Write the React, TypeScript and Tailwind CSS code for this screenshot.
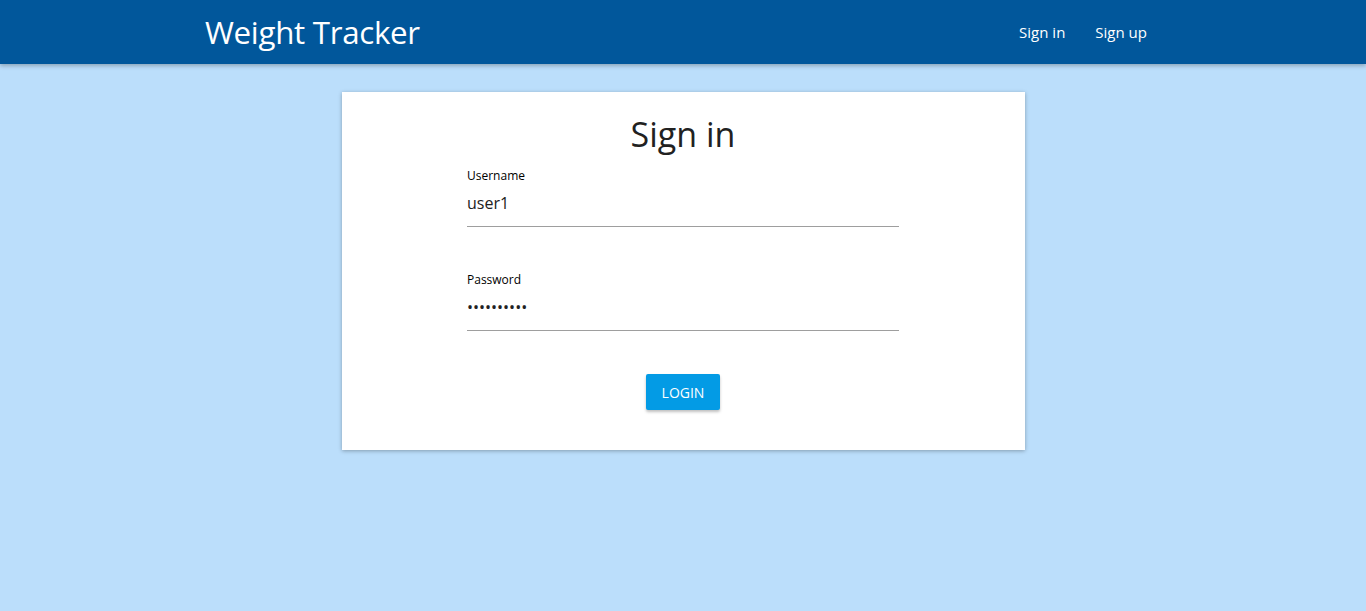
import React from 'react'

const App = () => {
  return (
    <div className="min-h-screen bg-[#bbdefb] text-[#212121] font-['Open_Sans',sans-serif]">
      <header className="h-16 bg-[#01579b] shadow-[0_2px_4px_rgba(0,0,0,0.25)]">
        <div className="mx-auto flex h-full w-[960px] items-center justify-between">
          <a href="#" className="pl-[2px] text-[31.3px] tracking-[-0.3px] text-white">Weight Tracker</a>
          <nav className="flex gap-[30px] pr-[16px] text-[15px] text-white">
            <a href="#">Sign in</a>
            <a href="#">Sign up</a>
          </nav>
        </div>
      </header>

      <main className="flex justify-center pt-7">
        <div className="w-1/2 bg-white pb-[40px] pt-[14px] shadow-[0_1px_4px_rgba(0,0,0,0.3)]">
          <h1 className="text-center text-[34px] leading-[56px]">Sign in</h1>
          <form className="mx-auto mt-[6px] w-[432px]">
            <label className="block text-[12px] leading-4 text-black">Username</label>
            <input
              defaultValue="user1"
              className="block h-[43px] w-full border-b border-[#9e9e9e] bg-transparent pb-[4px] pt-0 text-[16px] outline-none"
            />
            <label className="mt-[45px] block text-[12px] leading-4 text-black">Password</label>
            <input
              type="password"
              defaultValue="password12"
              className="block h-[43px] w-full border-b border-[#9e9e9e] bg-transparent pb-[4px] pt-0 text-[16px] outline-none"
            />
            <div className="mt-[43px] flex justify-center">
              <button
                type="button"
                className="h-9 rounded-[2px] bg-[#039be5] px-4 text-[14px] uppercase text-white shadow-[0_2px_3px_rgba(0,0,0,0.25)]"
              >
                Login
              </button>
            </div>
          </form>
        </div>
      </main>
    </div>
  )
}

export default App
